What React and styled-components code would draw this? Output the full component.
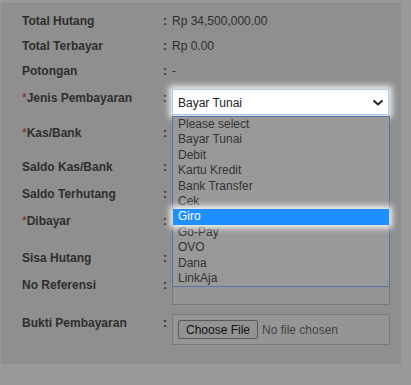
import React from "react";
import styled, { createGlobalStyle } from "styled-components";

const Global = createGlobalStyle`
  html, body { margin: 0; padding: 0; background: #999999; }
  body { font-family: "Liberation Sans", Arial, sans-serif; width: 411px; height: 385px; overflow: hidden; }
`;

const Panel = styled.div`
  margin: 3px 0 0 1px;
  width: 400px;
  box-sizing: border-box;
  padding: 11px 11px 19px 21px;
  background: #8f8f8f;
  display: flex;
  flex-direction: column;
`;

const Row = styled.div`
  display: grid;
  grid-template-columns: 141px 9px 218px;
  height: ${(p) => p.$h}px;
  align-items: start;
  position: relative;
  z-index: ${(p) => (p.$top ? 5 : 0)};
`;

const Label = styled.div`
  font-size: 12px;
  line-height: 15px;
  font-weight: bold;
  color: #2e2e2e;
  padding-top: ${(p) => p.$pt || 0}px;
  white-space: nowrap;
`;

const Star = styled.span`
  color: #7d2222;
  font-weight: normal;
`;

const Colon = styled.div`
  font-size: 12px;
  line-height: 15px;
  font-weight: bold;
  color: #2e2e2e;
  padding-top: ${(p) => p.$pt || 0}px;
`;

const Value = styled.div`
  font-size: 12px;
  line-height: 15px;
  color: #2e2e2e;
  padding-top: ${(p) => p.$pt || 0}px;
`;

const SelectWrap = styled.div`
  position: relative;
  width: 217px;
`;

const Select = styled.div`
  box-sizing: border-box;
  height: 26px;
  background: #ffffff;
  border: 1px solid #a8cdee;
  box-shadow: 0 0 6px 3px rgba(255, 255, 255, 0.85);
  display: flex;
  align-items: center;
  justify-content: space-between;
  padding: 1px 4px 0 5px;
  font-size: 12px;
  color: #222;
  position: relative;
  z-index: 2;
`;

const List = styled.ul`
  position: absolute;
  left: 0;
  top: 27px;
  width: 218px;
  margin: 0;
  padding: 0;
  list-style: none;
  background: #999999;
  border: 1px solid #5676a6;
  box-sizing: border-box;
  z-index: 3;
`;

const Option = styled.li`
  height: 15.4px;
  line-height: 15.4px;
  font-size: 12px;
  padding-left: 5px;
  color: ${(p) => (p.$active ? "#ffffff" : "#333333")};
  background: ${(p) => (p.$active ? "#1e8fff" : "transparent")};
  box-shadow: ${(p) => (p.$active ? "0 0 6px 3px rgba(255,255,255,0.9)" : "none")};
  position: relative;
  z-index: ${(p) => (p.$active ? 1 : 0)};
`;

const Input = styled.div`
  box-sizing: border-box;
  margin-top: ${(p) => p.$mt || 0}px;
  width: 218px;
  height: ${(p) => p.$h}px;
  border: 1px solid #7a7a7a;
  background: #959595;
  display: flex;
  align-items: center;
  padding-left: 5px;
  gap: 4px;
`;

const FileButton = styled.div`
  box-sizing: border-box;
  width: 80px;
  height: 19px;
  border: 1px solid #5a5a5a;
  border-radius: 2px;
  background: #929292;
  font-size: 12px;
  color: #111;
  display: flex;
  align-items: center;
  justify-content: center;
`;

const FileText = styled.span`
  font-size: 12px;
  color: #444;
`;

const options = [
  "Please select",
  "Bayar Tunai",
  "Debit",
  "Kartu Kredit",
  "Bank Transfer",
  "Cek",
  "Giro",
  "Go-Pay",
  "OVO",
  "Dana",
  "LinkAja",
];

export default function App() {
  return (
    <>
      <Global />
      <Panel>
        <Row $h={25}>
          <Label>Total Hutang</Label>
          <Colon>:</Colon>
          <Value>Rp 34,500,000.00</Value>
        </Row>
        <Row $h={25}>
          <Label>Total Terbayar</Label>
          <Colon>:</Colon>
          <Value>Rp 0.00</Value>
        </Row>
        <Row $h={25}>
          <Label>Potongan</Label>
          <Colon>:</Colon>
          <Value>-</Value>
        </Row>
        <Row $h={29} $top>
          <Label $pt={2}>
            <Star>*</Star>Jenis Pembayaran
          </Label>
          <Colon $pt={2}>:</Colon>
          <SelectWrap>
            <Select>
              <span>Bayar Tunai</span>
              <svg width="12" height="8" viewBox="0 0 12 8">
                <polyline points="1.5,1.5 6,5.5 10.5,1.5" fill="none" stroke="#222" strokeWidth="2" />
              </svg>
            </Select>
            <List>
              {options.map((o) => (
                <Option key={o} $active={o === "Giro"}>
                  {o}
                </Option>
              ))}
            </List>
          </SelectWrap>
        </Row>
        <Row $h={35}>
          <Label $pt={8}>
            <Star>*</Star>Kas/Bank
          </Label>
          <Colon $pt={8}>:</Colon>
          <div />
        </Row>
        <Row $h={27}>
          <Label $pt={7}>Saldo Kas/Bank</Label>
          <Colon $pt={7}>:</Colon>
          <div />
        </Row>
        <Row $h={27}>
          <Label $pt={7}>Saldo Terhutang</Label>
          <Colon $pt={7}>:</Colon>
          <div />
        </Row>
        <Row $h={37}>
          <Label $pt={6.5}>
            <Star>*</Star>Dibayar
          </Label>
          <Colon $pt={6.5}>:</Colon>
          <div />
        </Row>
        <Row $h={27}>
          <Label $pt={6.5}>Sisa Hutang</Label>
          <Colon $pt={6.5}>:</Colon>
          <div />
        </Row>
        <Row $h={40}>
          <Label $pt={6.5}>No Referensi</Label>
          <Colon $pt={6.5}>:</Colon>
          <Input $mt={3} $h={31} />
        </Row>
        <Row $h={34}>
          <Label $pt={4.5}>Bukti Pembayaran</Label>
          <Colon $pt={4.5}>:</Colon>
          <Input $mt={3} $h={31}>
            <FileButton>Choose File</FileButton>
            <FileText>No file chosen</FileText>
          </Input>
        </Row>
      </Panel>
    </>
  );
}
